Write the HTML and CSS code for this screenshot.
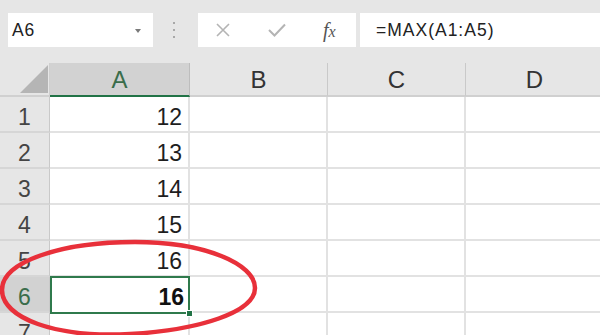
FILE: index.html
```html
<!DOCTYPE html>
<html>
<head>
<meta charset="utf-8">
<link rel="stylesheet" href="styles.css">
</head>
<body>
<div class="app">
  <div class="toolbar">
    <div class="namebox">
      <span class="name">A6</span>
      <span class="caret"></span>
    </div>
    <div class="dots"><i></i><i></i><i></i></div>
    <div class="buttons">
      <svg class="btn" width="16" height="16" viewBox="0 0 16 16"><path d="M2 2 L14 14 M14 2 L2 14" stroke="#b4b4b4" stroke-width="1.6" fill="none"/></svg>
      <svg class="btn" width="20" height="16" viewBox="0 0 20 16"><path d="M2 8 L7.5 13.5 L18 2.5" stroke="#b4b4b4" stroke-width="2" fill="none"/></svg>
      <span class="fx">f<span class="x">x</span></span>
    </div>
    <div class="formula">=MAX(A1:A5)</div>
  </div>

  <div class="sheet">
    <div class="grid">
      <div class="corner"><span class="tri"></span></div>
      <div class="colhead active">A</div>
      <div class="colhead">B</div>
      <div class="colhead">C</div>
      <div class="colhead last">D</div>

      <div class="rowhead">1</div><div class="cell num">12</div><div class="cell"></div><div class="cell"></div><div class="cell"></div>
      <div class="rowhead">2</div><div class="cell num">13</div><div class="cell"></div><div class="cell"></div><div class="cell"></div>
      <div class="rowhead">3</div><div class="cell num">14</div><div class="cell"></div><div class="cell"></div><div class="cell"></div>
      <div class="rowhead">4</div><div class="cell num">15</div><div class="cell"></div><div class="cell"></div><div class="cell"></div>
      <div class="rowhead">5</div><div class="cell num">16</div><div class="cell"></div><div class="cell"></div><div class="cell"></div>
      <div class="rowhead active">6</div><div class="cell num selected"><b>16</b><span class="handle"></span></div><div class="cell"></div><div class="cell"></div><div class="cell"></div>
      <div class="rowhead">7</div><div class="cell"></div><div class="cell"></div><div class="cell"></div><div class="cell"></div>
    </div>
    <svg class="ring" width="600" height="272" viewBox="0 63 600 272">
      <path d="M 2 290 C 2 262, 60 242, 135 242 C 205 242, 255 264, 255 288 C 255 312, 200 330, 130 334 C 55 338, 2 318, 2 290 Z" fill="none" stroke="#e8303a" stroke-width="4.5"/>
    </svg>
  </div>
</div>
</body>
</html>
```

FILE: styles.css
```css
* { box-sizing: border-box; }
html, body { margin: 0; padding: 0; }
body {
  width: 600px;
  height: 335px;
  overflow: hidden;
  background: #e6e6e6;
  font-family: "Liberation Sans", Arial, sans-serif;
}
.app { width: 600px; height: 335px; overflow: hidden; }

.toolbar {
  height: 63px;
  display: flex;
  align-items: flex-start;
  padding: 13px 0 0 8px;
}
.namebox {
  width: 145px;
  height: 34px;
  background: #fff;
  display: flex;
  align-items: center;
  justify-content: space-between;
  padding: 1px 12px 0 4px;
}
.name {
  font-size: 17.5px;
  letter-spacing: 0.8px;
  color: #222;
}
.caret {
  width: 0; height: 0;
  border-left: 3.5px solid transparent;
  border-right: 3.5px solid transparent;
  border-top: 4px solid #7a7a7a;
}
.dots {
  width: 45px;
  height: 34px;
  display: flex;
  flex-direction: column;
  align-items: center;
  justify-content: center;
  gap: 5px;
  padding-right: 4px;
}
.dots i {
  display: block;
  width: 2px; height: 2px;
  background: #a8a8a8;
}
.buttons {
  width: 158px;
  height: 34px;
  background: #fff;
  display: flex;
  align-items: center;
  padding-left: 17px;
}
.buttons .btn { display: block; }
.buttons .btn + .btn { margin-left: 36px; }
.fx {
  margin-left: 36px;
  font-family: "Liberation Serif", "Times New Roman", serif;
  font-style: italic;
  font-size: 20px;
  color: #555;
}
.fx .x { font-size: 16px; }
.formula {
  margin-left: 4px;
  flex: 1;
  height: 34px;
  background: #fff;
  padding: 1px 0 0 16px;
  display: flex;
  align-items: center;
  font-size: 17.5px;
  letter-spacing: 1px;
  color: #222;
  white-space: nowrap;
}

.sheet { position: relative; }
.grid {
  display: grid;
  grid-template-columns: 50px 140px 138px 138px 138px;
  grid-template-rows: 34px repeat(7, 36px);
  background: #fff;
  width: 604px;
}
.corner {
  background: #e6e6e6;
  border-right: 1px solid #cfcfcf;
  border-bottom: 2px solid #d0d0d0;
  position: relative;
}
.tri {
  position: absolute;
  left: 20px; top: 2px;
  width: 28px; height: 28px;
  background: #b5b5b5;
  clip-path: polygon(100% 0, 100% 100%, 0 100%);
}
.colhead {
  background: #e6e6e6;
  border-right: 1px solid #c9c9c9;
  border-bottom: 2px solid #d0d0d0;
  text-align: center;
  font-size: 24px;
  line-height: 30px;
  padding-top: 2px;
  color: #333;
}
.colhead.active {
  background: #d2d2d2;
  color: #3a6d4b;
  border-right-color: #bdbdbd;
  border-bottom: 2px solid #217346;
}
.rowhead {
  background: #e6e6e6;
  border-right: 1px solid #c9c9c9;
  border-bottom: 2px solid #d6d6d6;
  text-align: center;
  font-size: 23px;
  line-height: 26px;
  padding-top: 7px;
  color: #444;
}
.rowhead.active {
  background: #d2d2d2;
  color: #3a6d4b;
}
.cell {
  border-right: 2px solid #e2e2e2;
  border-bottom: 2px solid #e2e2e2;
  font-size: 23px;
  line-height: 26px;
  padding-top: 7px;
  color: #1e1e1e;
  position: relative;
}
.cell.num {
  text-align: right;
  padding-right: 6px;
}
.cell.selected {
  border: 2px solid #2f7a4c;
  margin: -1px 0 -1px 0;
  padding-top: 6px;
  padding-right: 4px;
  z-index: 2;
}
.cell.selected b { font-weight: bold; color: #111; }
.handle {
  position: absolute;
  right: -5px; bottom: -5px;
  width: 7px; height: 7px;
  background: #217346;
  border: 1px solid #fff;
  z-index: 3;
}
.ring {
  position: absolute;
  left: 0; top: 0;
  pointer-events: none;
  z-index: 5;
}
```
